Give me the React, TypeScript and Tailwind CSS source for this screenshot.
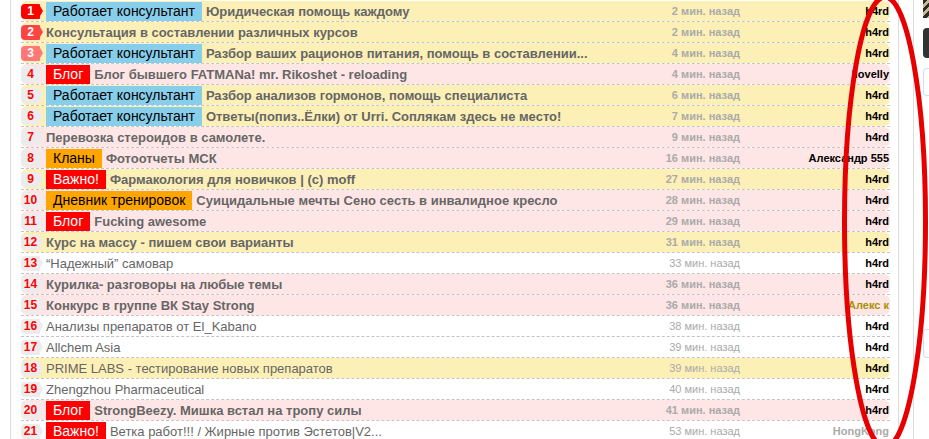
import React from "react";

type BadgeKind = "r1" | "r2" | "r3" | "g";
type LabelKind = "blue" | "red" | "orange";
type Bg = "y" | "p" | "w";

interface Row {
  n: number;
  badge: BadgeKind;
  label?: { text: string; kind: LabelKind };
  title: string;
  bg: Bg;
  bold: boolean;
  time: string;
  author: string;
  authorCls?: string;
}

const badgeBody: Record<BadgeKind, string> = {
  r1: "bg-[#ff0000] text-white",
  r2: "bg-[#ff4444] text-white",
  r3: "bg-[#ff7777] text-white",
  g: "bg-[#ececec] text-[#ff0000]",
};
const badgeTip: Record<BadgeKind, string> = {
  r1: "border-l-[#ff0000]",
  r2: "border-l-[#ff4444]",
  r3: "border-l-[#ff7777]",
  g: "border-l-[#ececec]",
};
const labelCls: Record<LabelKind, string> = {
  blue: "bg-[#87ceeb] text-black",
  red: "bg-[#ff0000] text-white",
  orange: "bg-[#ffa500] text-black",
};
const rowBg: Record<Bg, string> = {
  y: "bg-[#fdf0b6]",
  p: "bg-[#fee6e6]",
  w: "bg-white",
};

const RK = { text: "Работает консультант", kind: "blue" as LabelKind };
const BLOG = { text: "Блог", kind: "red" as LabelKind };
const VAZH = { text: "Важно!", kind: "red" as LabelKind };

const rows: Row[] = [
  { n: 1, badge: "r1", label: RK, title: "Юридическая помощь каждому", bg: "y", bold: true, time: "2 мин. назад", author: "h4rd" },
  { n: 2, badge: "r2", title: "Консультация в составлении различных курсов", bg: "y", bold: true, time: "2 мин. назад", author: "h4rd" },
  { n: 3, badge: "r3", label: RK, title: "Разбор ваших рационов питания, помощь в составлении...", bg: "y", bold: true, time: "4 мин. назад", author: "h4rd" },
  { n: 4, badge: "g", label: BLOG, title: "Блог бывшего FATMANa! mr. Rikoshet - reloading", bg: "p", bold: true, time: "4 мин. назад", author: "Ilovelly" },
  { n: 5, badge: "g", label: RK, title: "Разбор анализов гормонов, помощь специалиста", bg: "y", bold: true, time: "6 мин. назад", author: "h4rd" },
  { n: 6, badge: "g", label: RK, title: "Ответы(попиз..Ёлки) от Urri. Соплякам здесь не место!", bg: "y", bold: true, time: "7 мин. назад", author: "h4rd" },
  { n: 7, badge: "g", title: "Перевозка стероидов в самолете.", bg: "p", bold: true, time: "9 мин. назад", author: "h4rd" },
  { n: 8, badge: "g", label: { text: "Кланы", kind: "orange" }, title: "Фотоотчеты МСК", bg: "p", bold: true, time: "16 мин. назад", author: "Александр 555" },
  { n: 9, badge: "g", label: VAZH, title: "Фармакология для новичков | (c) moff", bg: "y", bold: true, time: "27 мин. назад", author: "h4rd" },
  { n: 10, badge: "g", label: { text: "Дневник тренировок", kind: "orange" }, title: "Суицидальные мечты Сено сесть в инвалидное кресло", bg: "p", bold: true, time: "28 мин. назад", author: "h4rd" },
  { n: 11, badge: "g", label: BLOG, title: "Fucking awesome", bg: "p", bold: true, time: "29 мин. назад", author: "h4rd" },
  { n: 12, badge: "g", title: "Курс на массу - пишем свои варианты", bg: "y", bold: true, time: "31 мин. назад", author: "h4rd" },
  { n: 13, badge: "g", title: "“Надежный” самовар", bg: "w", bold: false, time: "33 мин. назад", author: "h4rd" },
  { n: 14, badge: "g", title: "Курилка- разговоры на любые темы", bg: "p", bold: true, time: "36 мин. назад", author: "h4rd" },
  { n: 15, badge: "g", title: "Конкурс в группе ВК Stay Strong", bg: "p", bold: true, time: "36 мин. назад", author: "Алекс к", authorCls: "text-[#a89000]" },
  { n: 16, badge: "g", title: "Анализы препаратов от El_Kabano", bg: "w", bold: false, time: "38 мин. назад", author: "h4rd" },
  { n: 17, badge: "g", title: "Allchem Asia", bg: "w", bold: false, time: "39 мин. назад", author: "h4rd" },
  { n: 18, badge: "g", title: "PRIME LABS - тестирование новых препаратов", bg: "y", bold: false, time: "39 мин. назад", author: "h4rd" },
  { n: 19, badge: "g", title: "Zhengzhou Pharmaceutical", bg: "w", bold: false, time: "40 мин. назад", author: "h4rd" },
  { n: 20, badge: "g", label: BLOG, title: "StrongBeezy. Мишка встал на тропу силы", bg: "p", bold: true, time: "41 мин. назад", author: "h4rd" },
  { n: 21, badge: "g", label: VAZH, title: "Ветка работ!!! / Жирные против Эстетов|V2...", bg: "w", bold: false, time: "53 мин. назад", author: "HongKong", authorCls: "text-[#aaaaaa]" },
];

function TopicRow({ r }: { r: Row }) {
  return (
    <div className="h-[21px] border-b border-dashed border-[#c4c4c4]">
      <div className={`h-[20px] rounded-[6px] flex items-center ${rowBg[r.bg]}`}>
        <div className="w-[25px] flex-none flex items-center">
          <div
            className={`h-[15px] w-[19px] rounded-l-[4px] rounded-r-[1px] flex items-center justify-center text-[12px] font-bold leading-none ${badgeBody[r.badge]}`}
          >
            {r.n}
          </div>
          <div className={`w-0 h-0 border-y-[5px] border-y-transparent border-l-[3px] ${badgeTip[r.badge]}`} />
        </div>
        {r.label && (
          <div
            className={`h-[19px] px-[7px] mr-[4px] flex-none flex items-center text-[14px] leading-none ${labelCls[r.label.kind]}`}
          >
            {r.label.text}
          </div>
        )}
        <div
          className={`flex-1 min-w-0 truncate text-[13px] leading-[17px] text-[#666666] ${r.bold ? "font-bold" : "font-normal"}`}
        >
          {r.title}
        </div>
        <div
          className={`w-[120px] flex-none text-right text-[11px] leading-none text-[#aaaaaa] whitespace-nowrap ${r.bold ? "font-bold" : "font-normal"}`}
        >
          {r.time}
        </div>
        <div
          className={`w-[150px] flex-none text-right pr-[1px] text-[11px] leading-[15px] font-bold whitespace-nowrap overflow-hidden ${r.authorCls ?? "text-black"}`}
        >
          {r.author}
        </div>
      </div>
    </div>
  );
}

export default function App() {
  return (
    <div className="relative w-[929px] h-[439px] overflow-hidden bg-white flex font-['Liberation_Sans',Arial,sans-serif]">
      <div className="ml-[10px] w-[889px] flex-none border-x border-[#dddddd] pl-[10px] pr-[8px] pt-[1px]">
        {rows.map((r) => (
          <TopicRow key={r.n} r={r} />
        ))}
      </div>
      <div className="ml-[14px] flex-1 border-l border-[#dddddd] pl-[9px] flex flex-col">
        <div className="h-[18px] bg-[repeating-linear-gradient(135deg,#2e2a26_0px,#2e2a26_3px,#c9b896_3px,#c9b896_6px)]" />
        <div className="mt-[10px] h-[30px] rounded-l-[4px] bg-[#333333]" />
        <div className="mt-[10px] h-[28px] rounded-l-[4px] border border-r-0 border-[#cfe0ee] bg-white" />
        <div className="mt-[233px] h-[29px] rounded-l-[4px] border border-r-0 border-[#cfe0ee] bg-white" />
      </div>
      <svg className="absolute inset-0 pointer-events-none" width="929" height="439" viewBox="0 0 929 439">
        <ellipse cx="885" cy="222" rx="40.5" ry="225" fill="none" stroke="#e60000" strokeWidth="5" />
      </svg>
    </div>
  );
}
